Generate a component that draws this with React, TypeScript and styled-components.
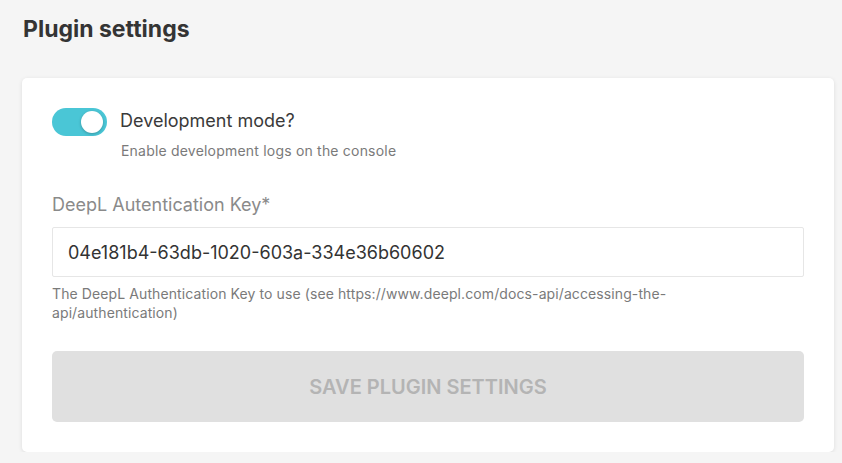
import React, { useState } from 'react';
import styled, { createGlobalStyle } from 'styled-components';

const GlobalStyle = createGlobalStyle`
  html, body {
    margin: 0;
    padding: 0;
    background: #f5f5f5;
  }
  body {
    font-family: Inter, 'Noto Sans', sans-serif;
    color: #333;
  }
  * {
    box-sizing: border-box;
  }
`;

const Page = styled.div`
  padding: 14px 8px 0 22px;
  display: flex;
  flex-direction: column;
`;

const Title = styled.h1`
  margin: 0 0 34px 1px;
  font-size: 23px;
  line-height: 30px;
  font-weight: 700;
  color: #343434;
`;

const Card = styled.div`
  width: 812px;
  background: #fff;
  border-radius: 5px;
  box-shadow: 0 1px 4px rgba(0, 0, 0, 0.1);
  padding: 30px;
  display: flex;
  flex-direction: column;
`;

const SwitchRow = styled.div`
  display: flex;
  align-items: center;
  gap: 13px;
`;

const SwitchTrack = styled.button<{ $on: boolean }>`
  width: 55px;
  height: 28px;
  border: 0;
  padding: 0;
  border-radius: 14px;
  background: ${({ $on }) => ($on ? '#4ac6d6' : '#ccc')};
  display: flex;
  align-items: center;
  justify-content: ${({ $on }) => ($on ? 'flex-end' : 'flex-start')};
  cursor: pointer;
`;

const SwitchKnob = styled.span`
  width: 22px;
  height: 22px;
  margin: 0 4px;
  border-radius: 50%;
  background: #fff;
  box-shadow: 0 1px 3px rgba(0, 0, 0, 0.25);
`;

const SwitchLabel = styled.span`
  padding-bottom: 3px;
  font-size: 18px;
  color: #3a3a3a;
`;

const SwitchHint = styled.div`
  margin: 6px 0 0 69px;
  font-size: 14px;
  letter-spacing: 0.2px;
  color: #7a7a7a;
`;

const Field = styled.div`
  margin-top: 34px;
  display: flex;
  flex-direction: column;
`;

const FieldLabel = styled.label`
  font-size: 18px;
  line-height: 24px;
  color: #8a8a8a;
  margin-bottom: 10px;
`;

const TextInput = styled.input`
  height: 50px;
  width: 100%;
  border: 1px solid #e6e6e6;
  border-radius: 2px;
  padding: 0 15px;
  font-family: inherit;
  font-size: 18px;
  color: #333;
  outline: none;
`;

const FieldHint = styled.div`
  margin-top: 7px;
  max-width: 720px;
  font-size: 14px;
  line-height: 19px;
  letter-spacing: 0.1px;
  color: #7a7a7a;
`;

const SaveButton = styled.button`
  margin-top: 29px;
  height: 71px;
  width: 100%;
  border: 0;
  border-radius: 5px;
  background: #e0e0e0;
  color: #b4b4b4;
  font-family: inherit;
  font-size: 20px;
  font-weight: 600;
  text-transform: uppercase;
  cursor: not-allowed;
`;

export default function App() {
  const [devMode, setDevMode] = useState(true);
  const [apiKey, setApiKey] = useState('04e181b4-63db-1020-603a-334e36b60602');

  return (
    <>
      <GlobalStyle />
      <Page>
        <Title>Plugin settings</Title>
        <Card>
          <SwitchRow>
            <SwitchTrack $on={devMode} onClick={() => setDevMode(!devMode)}>
              <SwitchKnob />
            </SwitchTrack>
            <SwitchLabel>Development mode?</SwitchLabel>
          </SwitchRow>
          <SwitchHint>Enable development logs on the console</SwitchHint>

          <Field>
            <FieldLabel>DeepL Autentication Key*</FieldLabel>
            <TextInput value={apiKey} onChange={(e) => setApiKey(e.target.value)} />
            <FieldHint>
              The DeepL Authentication Key to use (see
              https://www.deepl.com/docs-api/accessing-the-api/authentication)
            </FieldHint>
          </Field>

          <SaveButton disabled>Save plugin settings</SaveButton>
        </Card>
      </Page>
    </>
  );
}
